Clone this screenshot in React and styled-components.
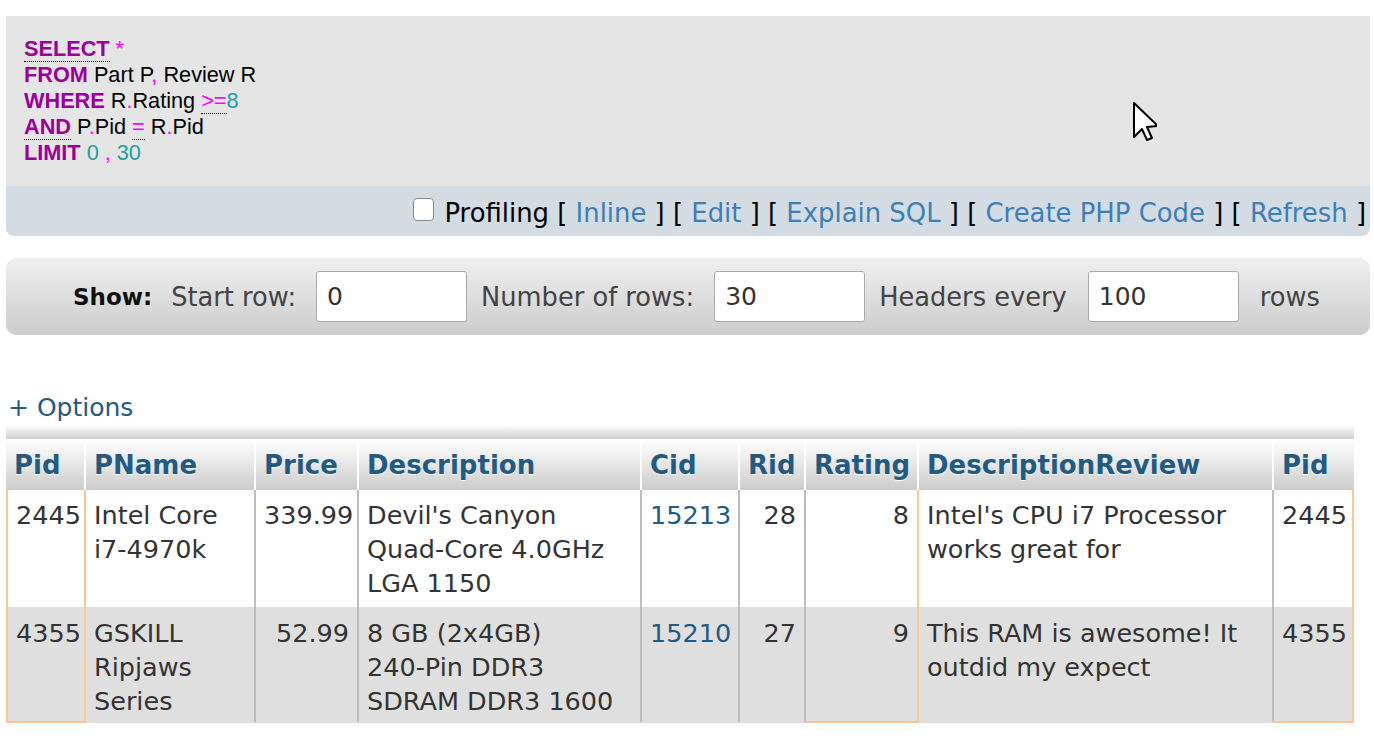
import React from 'react';
import styled, { createGlobalStyle } from 'styled-components';

const GlobalStyle = createGlobalStyle`
  html, body {
    margin: 0;
    padding: 0;
    background: #fff;
  }
  body {
    font-family: "DejaVu Sans", sans-serif;
    color: #444;
  }
`;

const Page = styled.div`
  padding: 16px 4px 20px 6px;
  width: 1364px;
`;

const SqlBox = styled.div`
  position: relative;
  background: #e5e5e5;
  border-radius: 0 0 8px 8px;
`;

const Code = styled.div`
  padding: 20px 18px 20px 18px;
  font-family: "Liberation Sans", Arial, sans-serif;
  font-size: 21.7px;
  line-height: 26px;
  color: #000;
`;

const CodeLine = styled.div`
  white-space: pre;
`;

const Kw = styled.span`
  color: #990099;
  font-weight: bold;
  border-bottom: ${p => (p.$abbr ? '1px dotted #000' : 'none')};
`;

const Punct = styled.span`
  color: #ff00ff;
  border-bottom: ${p => (p.$abbr ? '1px dotted #000' : 'none')};
`;

const Num = styled.span`
  color: #1fa0a8;
`;

const Cursor = styled.svg`
  position: absolute;
  left: 1121px;
  top: 85px;
`;

const ActionBar = styled.div`
  box-sizing: border-box;
  background: #d3dce3;
  height: 50px;
  padding: 3px 4px 0 0;
  display: flex;
  align-items: center;
  justify-content: flex-end;
  border-radius: 0 0 8px 8px;
  font-size: 25.9px;
  color: #000;
  white-space: pre;
`;

const Check = styled.input`
  appearance: none;
  width: 21px;
  height: 23px;
  margin: -6px 10px 0 0;
  background: #fff;
  border: 1px solid #8a8a8a;
  border-radius: 4px;
`;

const BarLink = styled.a`
  color: #3d7fb6;
  text-decoration: none;
`;

const ShowBar = styled.div`
  margin-top: 22px;
  height: 77px;
  display: flex;
  align-items: center;
  padding-left: 67px;
  border-radius: 10px;
  background: linear-gradient(#f0f0f0, #cccccc);
  font-size: 25.7px;
  color: #444;
`;

const ShowTitle = styled.b`
  font-size: 23px;
  color: #111;
  margin-right: 19px;
`;

const Label = styled.span`
  margin-right: ${p => p.$gap || 21}px;
  white-space: nowrap;
`;

const Field = styled.input`
  box-sizing: border-box;
  width: 151px;
  height: 51px;
  margin-right: ${p => p.$gap || 14}px;
  padding: 0 10px;
  border: 1px solid #aaa;
  border-radius: 3px;
  background: #fff;
  font-family: "DejaVu Sans", sans-serif;
  font-size: 25px;
  color: #333;
`;

const Options = styled.a`
  display: block;
  margin: 57px 0 0 2px;
  font-size: 25px;
  line-height: 32px;
  color: #235a81;
  text-decoration: none;
`;

const Strip = styled.div`
  width: 1348px;
  height: 14px;
  margin-top: 1px;
  background: linear-gradient(#ffffff, #cccccc);
  border-bottom: 1px solid #fff;
`;

const Table = styled.table`
  table-layout: fixed;
  width: 1348px;
  border-collapse: separate;
  border-spacing: 0;
  font-size: 25.5px;
  line-height: 34px;
`;

const Col = styled.col`
  width: ${p => p.$w}px;
`;

const Th = styled.th`
  height: 50px;
  padding: 0 8px;
  box-sizing: border-box;
  font-size: 26px;
  text-align: left;
  white-space: nowrap;
  color: #235a81;
  text-shadow: 0 1px 0 #fff;
  background: linear-gradient(#ffffff, #cccccc);
  border-right: ${p => (p.$last ? 'none' : '2px solid #fff')};
`;

const Tr = styled.tr`
  background: ${p => (p.$odd ? '#dfdfdf' : '#fff')};
`;

const orange = '2px solid #ffc691';
const gray = '2px solid #bcbcbc';

const Td = styled.td`
  vertical-align: top;
  padding: ${p => (p.$lastRow ? '9px 8px 3px 8px' : '8px 8px 7px 8px')};
  color: #333;
  text-align: ${p => (p.$num ? 'right' : 'left')};
  border-left: ${p => (p.$first ? orange : 'none')};
  border-right: ${p => (p.$cond ? orange : p.$last ? 'none' : gray)};
  border-bottom: ${p => (p.$lastRow ? (p.$cond ? orange : '2px solid transparent') : 'none')};
`;

const CellLink = styled.a`
  color: #235a81;
  text-decoration: none;
`;

const columns = [
  { name: 'Pid', w: 80, num: true, cond: true, first: true },
  { name: 'PName', w: 170 },
  { name: 'Price', w: 103, num: true },
  { name: 'Description', w: 283 },
  { name: 'Cid', w: 98, num: true, link: true },
  { name: 'Rid', w: 66, num: true },
  { name: 'Rating', w: 113, num: true, cond: true },
  { name: 'DescriptionReview', w: 355 },
  { name: 'Pid', w: 80, num: true, cond: true, last: true },
];

const rows = [
  [['2445'], ['Intel Core', 'i7-4970k'], ['339.99'], ["Devil's Canyon", 'Quad-Core 4.0GHz', 'LGA 1150'], ['15213'], ['28'], ['8'], ["Intel's CPU i7 Processor", 'works great for'], ['2445']],
  [['4355'], ['GSKILL', 'Ripjaws', 'Series'], ['52.99'], ['8 GB (2x4GB)', '240-Pin DDR3', 'SDRAM DDR3 1600'], ['15210'], ['27'], ['9'], ['This RAM is awesome! It', 'outdid my expect'], ['4355']],
];

function CellText({ lines }) {
  return lines.map((l, i) => (
    <React.Fragment key={i}>
      {i > 0 && <br />}
      {l}
    </React.Fragment>
  ));
}

function Sql() {
  return (
    <Code>
      <CodeLine><Kw $abbr>SELECT</Kw> <Punct>*</Punct></CodeLine>
      <CodeLine><Kw>FROM</Kw> Part P<Punct>,</Punct> Review R</CodeLine>
      <CodeLine><Kw>WHERE</Kw> R<Punct>.</Punct>Rating <Punct $abbr>&gt;=</Punct><Num>8</Num></CodeLine>
      <CodeLine><Kw $abbr>AND</Kw> P<Punct>.</Punct>Pid <Punct $abbr>=</Punct> R<Punct>.</Punct>Pid</CodeLine>
      <CodeLine><Kw>LIMIT</Kw> <Num>0</Num> <Punct>,</Punct> <Num>30</Num></CodeLine>
    </Code>
  );
}

export default function App() {
  return (
    <>
      <GlobalStyle />
      <Page>
        <SqlBox>
          <Sql />
          <ActionBar>
            <Check type="checkbox" />
            Profiling [ <BarLink href="#">Inline</BarLink> ] [ <BarLink href="#">Edit</BarLink> ] [ <BarLink href="#">Explain SQL</BarLink> ] [ <BarLink href="#">Create PHP Code</BarLink> ] [ <BarLink href="#">Refresh</BarLink> ]
          </ActionBar>
          <Cursor width="30" height="45" viewBox="0 0 30 45">
            <path d="M8 18 L8 52 L16 44 L21 55 L26 53 L21 42 L32 41 Z" transform="translate(-1 -16)" fill="#fff" stroke="#000" strokeWidth="2" strokeLinejoin="round" />
          </Cursor>
        </SqlBox>

        <ShowBar>
          <ShowTitle>Show:</ShowTitle>
          <Label $gap={20}>Start row:</Label>
          <Field defaultValue="0" />
          <Label $gap={20}>Number of rows:</Label>
          <Field defaultValue="30" />
          <Label $gap={21}>Headers every</Label>
          <Field defaultValue="100" $gap={21} />
          <Label>rows</Label>
        </ShowBar>

        <Options href="#">+ Options</Options>
        <Strip />
        <Table>
          <colgroup>
            {columns.map((c, i) => <Col key={i} $w={c.w} />)}
          </colgroup>
          <thead>
            <tr>
              {columns.map((c, i) => (
                <Th key={i} $last={c.last}>{c.name}</Th>
              ))}
            </tr>
          </thead>
          <tbody>
            {rows.map((r, ri) => (
              <Tr key={ri} $odd={ri % 2 === 1}>
                {r.map((v, ci) => {
                  const c = columns[ci];
                  return (
                    <Td
                      key={ci}
                      $num={c.num}
                      $cond={c.cond}
                      $first={c.first}
                      $last={c.last}
                      $lastRow={ri === rows.length - 1}
                    >
                      {c.link ? <CellLink href="#"><CellText lines={v} /></CellLink> : <CellText lines={v} />}
                    </Td>
                  );
                })}
              </Tr>
            ))}
          </tbody>
        </Table>
      </Page>
    </>
  );
}
